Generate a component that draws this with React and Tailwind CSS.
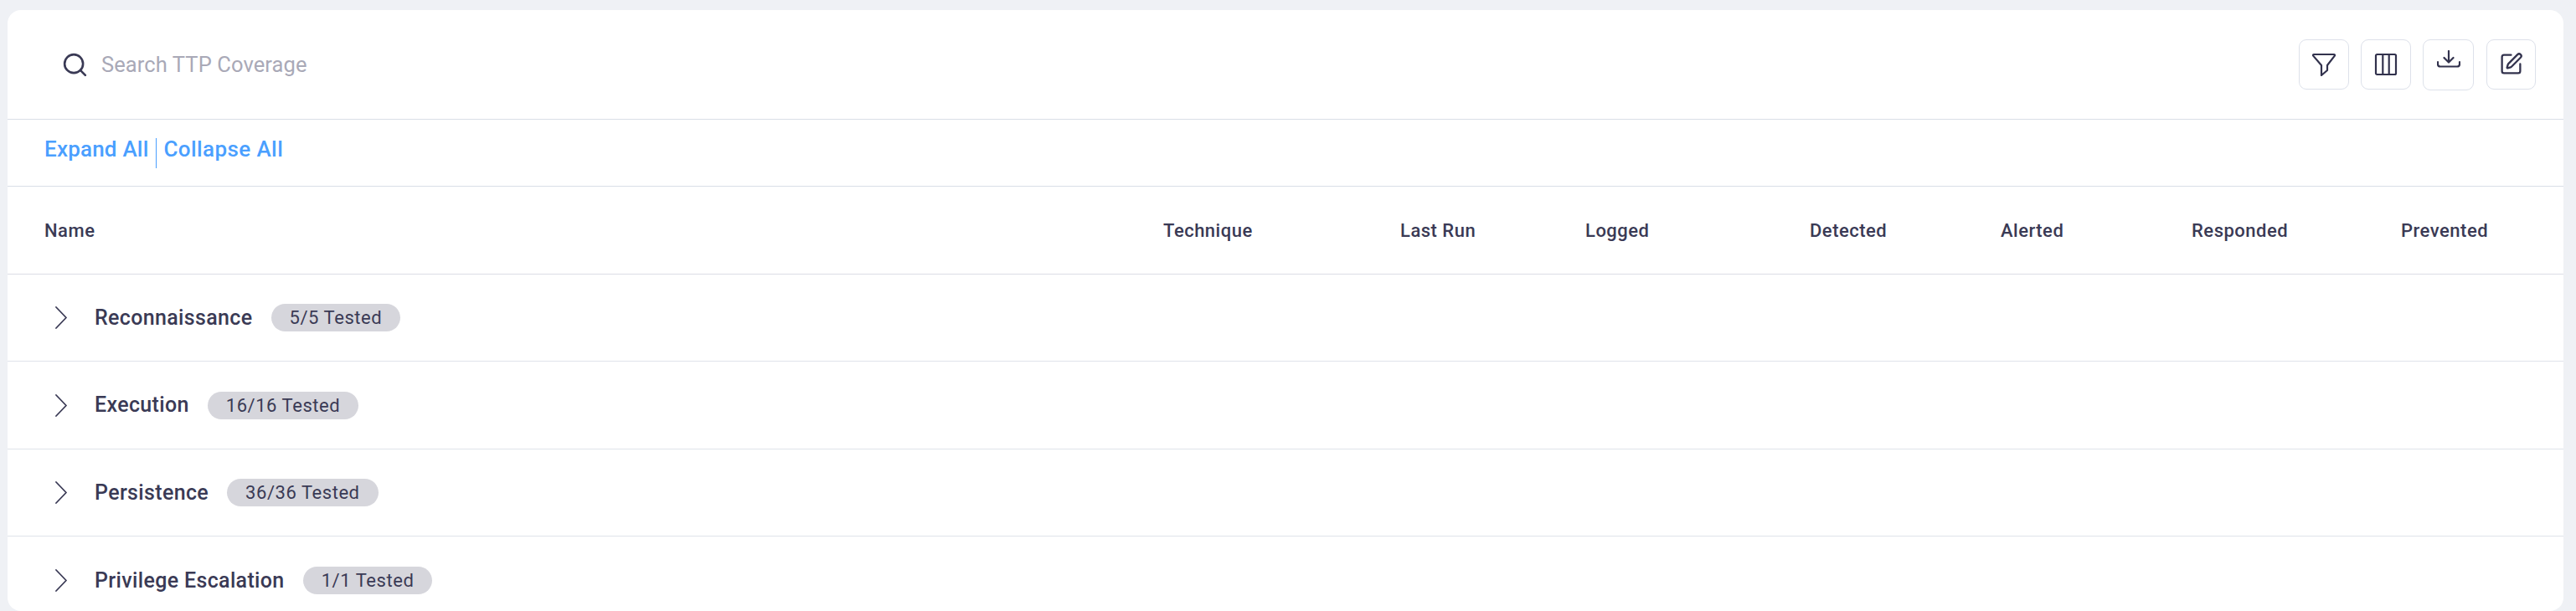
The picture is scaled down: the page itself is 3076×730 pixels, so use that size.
import { Search, SquarePen } from "lucide-react"

const columns = ["Name", "Technique", "Last Run", "Logged", "Detected", "Alerted", "Responded", "Prevented"]

const tactics = [
  { name: "Reconnaissance", tested: "5/5 Tested" },
  { name: "Execution", tested: "16/16 Tested" },
  { name: "Persistence", tested: "36/36 Tested" },
  { name: "Privilege Escalation", tested: "1/1 Tested" },
]

function IconButton({ className, children }) {
  return (
    <button className={`flex items-center justify-center rounded-[9px] border border-[#dde1ea] bg-white text-[#32324d] ${className}`}>
      {children}
    </button>
  )
}

function FilterIcon() {
  return (
    <svg width="28" height="28" viewBox="0 0 28 28" fill="none" stroke="currentColor" strokeWidth="2.200" strokeLinejoin="round">
      <path d="M2 2h24a1 1 0 0 1 .8 1.600L18 15v6l-7 6V15L1.200 3.600A1 1 0 0 1 2 2z" />
    </svg>
  )
}

function ColumnsIcon() {
  return (
    <svg width="28" height="28" viewBox="0 0 28 28" fill="none" stroke="currentColor" strokeWidth="2.200" strokeLinejoin="round">
      <rect x="2" y="2" width="24" height="24" rx="1.500" />
      <path d="M10.300 2v24M17.700 2v24" />
    </svg>
  )
}

function DownloadIcon() {
  return (
    <svg width="28" height="22" viewBox="0 0 28 22" fill="none" stroke="currentColor" strokeWidth="2.200" strokeLinecap="round" strokeLinejoin="round">
      <path d="M14 1v13M8.500 9l5.500 5.500 5.500-5.500" />
      <path d="M1 14v2.500a3 3 0 0 0 3 3h20a3 3 0 0 0 3-3V14" />
    </svg>
  )
}

function Chevron() {
  return (
    <svg width="14" height="27" viewBox="0 0 14 27" fill="none" stroke="currentColor" strokeWidth="1.800" strokeLinecap="round" strokeLinejoin="round">
      <path d="M1 1l12 12.500L1 26" />
    </svg>
  )
}

export default function App() {
  return (
    <div className="h-[730px] overflow-hidden bg-[#eff1f5] pt-3 pl-[9px] pr-[15px] font-['Roboto',sans-serif] text-[#3a3a55]">
      <div className="h-[718px] overflow-hidden rounded-2xl bg-white">
        <div className="flex h-[131px] items-center justify-between border-b border-[#d9dee7] pl-[64px] pr-[33px]">
          <div className="flex items-center gap-[15px]">
            <Search size={33} strokeWidth={1.900} />
            <input
              placeholder="Search TTP Coverage"
              className="w-[400px] bg-transparent text-[25.500px] tracking-[0.1px] outline-none placeholder:text-[#a9a9b7]"
            />
          </div>
          <div className="flex items-start gap-[14px]">
            <IconButton className="h-[60px] w-[60px]"><FilterIcon /></IconButton>
            <IconButton className="h-[60px] w-[60px]"><ColumnsIcon /></IconButton>
            <IconButton className="h-[61px] w-[61px] pb-[13px]"><DownloadIcon /></IconButton>
            <IconButton className="ml-px h-[60px] w-[59px]"><SquarePen size={29} strokeWidth={1.900} /></IconButton>
          </div>
        </div>

        <div className="flex h-[80px] items-start border-b border-[#d9dee7] pl-[44px] pt-[22px] text-[26px] font-medium tracking-[0.2px] text-[#4a9fff]">
          <span className="leading-[27px]">Expand All</span>
          <span className="ml-[9px] mr-[8px] h-[36px] w-px bg-[#4a9fff]" />
          <span className="leading-[27px] tracking-[0.4px]">Collapse All</span>
        </div>

        <div className="grid h-[105px] grid-cols-[1336px_283px_221px_268px_228px_228px_250px_1fr] items-center border-b border-[#dcdde5] pl-[44px] text-[22px] font-medium tracking-[0.5px]">
          {columns.map((column) => (
            <div key={column}>{column}</div>
          ))}
        </div>

        {tactics.map((tactic) => (
          <div key={tactic.name} className="flex h-[104.400px] items-center border-b border-[#dfe3ea] pl-[57px] last:border-b-0">
            <Chevron />
            <span className="ml-[33px] text-[25px] font-medium tracking-[0.35px]">{tactic.name}</span>
            <span className="ml-[22px] flex h-[33px] items-center rounded-full bg-[#d6d6dc] px-[22px] text-[22px] tracking-[0.55px]">
              {tactic.tested}
            </span>
          </div>
        ))}
      </div>
    </div>
  )
}
